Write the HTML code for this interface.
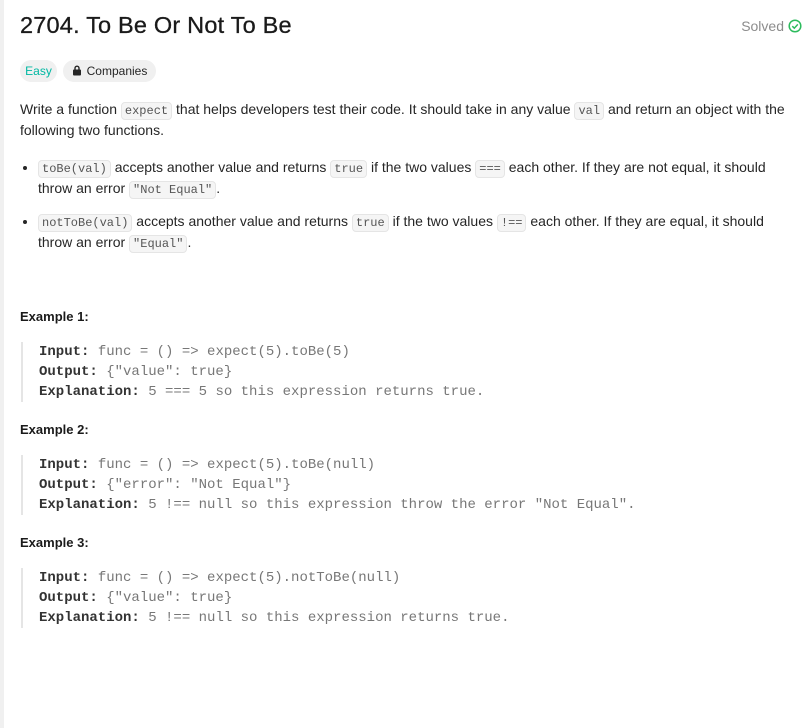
<!DOCTYPE html>
<html><head><style>
body{margin:0;width:811px;height:728px;background:#fff;font-family:"Liberation Sans",sans-serif;color:#262626;position:relative;overflow:hidden}
.strip{position:absolute;left:0;top:0;width:4px;height:728px;background:#f0f0f0}
.c{position:absolute;left:20px;width:775px}
h1{position:absolute;left:20px;top:12px;margin:0;font-size:23.5px;font-weight:normal;color:#1a1a1a;letter-spacing:0.2px;-webkit-text-stroke:0.3px #1a1a1a}
.solved{position:absolute;right:9px;top:18px;font-size:14px;color:#8c8c8c;display:flex;align-items:center;gap:4px}
.chip{position:absolute;top:60px;height:22px;border-radius:11px;background:#f0f0f0;font-size:12px;line-height:22px;text-align:center;box-sizing:border-box}
p,li{font-size:14px;line-height:21px;margin:0}
code{font-family:"Liberation Mono",monospace;font-size:12px;line-height:12px;background:#f5f5f5;border:1px solid #e5e5e5;border-radius:4px;padding:0 3px;color:#555;display:inline-block;padding-top:2px;padding-bottom:2px;vertical-align:0}
ul{margin:0;padding-left:18px}
.ex{position:absolute;left:20px;font-size:13px;font-weight:bold;color:#1a1a1a}
pre{position:absolute;left:21px;margin:0;border-left:2px solid #e5e5e5;padding-left:16px;font-family:"Liberation Mono",monospace;font-size:14px;line-height:20px;color:#777}
pre b{color:#333}
</style></head><body>
<div class="strip"></div>
<h1>2704. To Be Or Not To Be</h1>
<div class="solved">Solved <svg width="14" height="14" viewBox="0 0 14 14"><circle cx="7" cy="7" r="5.8" fill="none" stroke="#2cbb5d" stroke-width="1.5"/><path d="M4.3 7.2l2 2 3.5-3.8" fill="none" stroke="#2cbb5d" stroke-width="1.5"/></svg></div>
<div class="chip" style="left:20px;width:37px;color:#00b8a3">Easy</div>
<div class="chip" style="left:63px;width:93px;color:#262626"><svg width="10" height="11" viewBox="0 0 10 11" style="vertical-align:-1px;margin-right:5px"><rect x="1" y="4.5" width="8" height="6" rx="1" fill="#262626"/><path d="M3 5V3.2a2 2 0 0 1 4 0V5" fill="none" stroke="#262626" stroke-width="1.4"/></svg>Companies</div>
<div class="c" style="top:99px"><p>Write a function <code>expect</code> that helps developers test their code. It should take in any value <code>val</code> and return an object with the following two functions.</p></div>
<div class="c" style="top:157px"><ul>
<li><code>toBe(val)</code> accepts another value and returns <code>true</code> if the two values <code>===</code> each other. If they are not equal, it should throw an error <code>"Not Equal"</code>.</li>
<li style="margin-top:12px"><code>notToBe(val)</code> accepts another value and returns <code>true</code> if the two values <code>!==</code> each other. If they are equal, it should throw an error <code>"Equal"</code>.</li>
</ul></div>
<div class="ex" style="top:309px">Example 1:</div>
<pre style="top:342px"><b>Input:</b> func = () =&gt; expect(5).toBe(5)
<b>Output:</b> {"value": true}
<b>Explanation:</b> 5 === 5 so this expression returns true.</pre>
<div class="ex" style="top:422px">Example 2:</div>
<pre style="top:455px"><b>Input:</b> func = () =&gt; expect(5).toBe(null)
<b>Output:</b> {"error": "Not Equal"}
<b>Explanation:</b> 5 !== null so this expression throw the error "Not Equal".</pre>
<div class="ex" style="top:535px">Example 3:</div>
<pre style="top:568px"><b>Input:</b> func = () =&gt; expect(5).notToBe(null)
<b>Output:</b> {"value": true}
<b>Explanation:</b> 5 !== null so this expression returns true.</pre>
</body></html>
